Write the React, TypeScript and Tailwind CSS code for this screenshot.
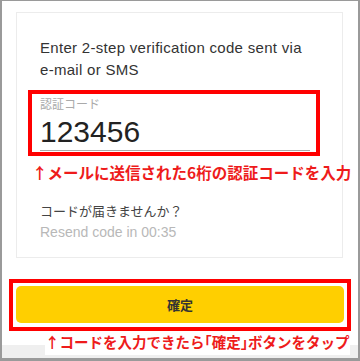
import React from "react";

export default function App() {
  return (
    <div className="w-[360px] h-[361px] box-border border-solid border-[#9a9a9a] border-t border-l-2 border-r-2 border-b-[3px] bg-white flex flex-col font-['Liberation_Sans','Noto_Sans_CJK_JP',sans-serif] overflow-hidden">
      {/* Card */}
      <div className="mt-[11px] ml-[14px] mr-[15px] h-[246px] shrink-0 border border-[#ececec] pt-[24px] pl-[11px] flex flex-col">
        <p className="pl-[12px] text-[15px] leading-[22px] tracking-[0.3px] text-[#333]">
          Enter 2-step verification code sent via
          <br />
          e-mail or SMS
        </p>
        <div className="mt-[9px] w-[292px] h-[66px] border-4 border-[#ff0000] pl-[8px] pr-[6px] pt-[3px] flex flex-col">
          <div className="text-[12px] leading-[14px] text-[#aaaaaa] font-['Noto_Sans_CJK_JP',sans-serif]">
            認証コード
          </div>
          <div className="mt-[6px] text-[30px] leading-[30px] text-[#222]">123456</div>
          <div className="mt-[3px] h-px bg-[#aaaaaa]" />
        </div>
        <div className="mt-[6px] pl-[4px] whitespace-nowrap text-[15.5px] leading-[20px] font-bold text-[#ee1b1b] font-['Noto_Sans_CJK_JP',sans-serif]">
          ↑メールに送信された6桁の認証コードを入力
        </div>
        <div className="mt-[20px] pl-[12px] text-[13px] leading-[18px] text-[#444] font-['Noto_Sans_CJK_JP',sans-serif]">
          コードが届きませんか？
        </div>
        <div className="mt-[2px] pl-[12px] text-[14px] leading-[20px] text-[#b8b8b8]">
          Resend code in 00:35
        </div>
      </div>

      {/* Button with highlight */}
      <div className="mt-[21px] mx-[7px] shrink-0 border-4 border-[#ff0000] pt-[3px] px-[3px] pb-[4px]">
        <div className="h-[37px] rounded-[5px] bg-[#ffcf00] flex items-center justify-center text-[13px] font-bold text-[#333] font-['Noto_Sans_CJK_JP',sans-serif]">
          確定
        </div>
      </div>

      {/* Bottom annotation */}
      <div className="flex-1 bg-[linear-gradient(to_bottom,#ffffff_14px,#efefef_14px)] pl-[43px]">
        <span className="inline-block bg-white pb-[3px] whitespace-nowrap text-[14.5px] leading-[20px] font-bold text-[#ee1b1b] font-['Noto_Sans_CJK_JP',sans-serif] [font-feature-settings:'halt']">
          ↑コードを入力できたら「確定」ボタンをタップ
        </span>
      </div>
    </div>
  );
}
